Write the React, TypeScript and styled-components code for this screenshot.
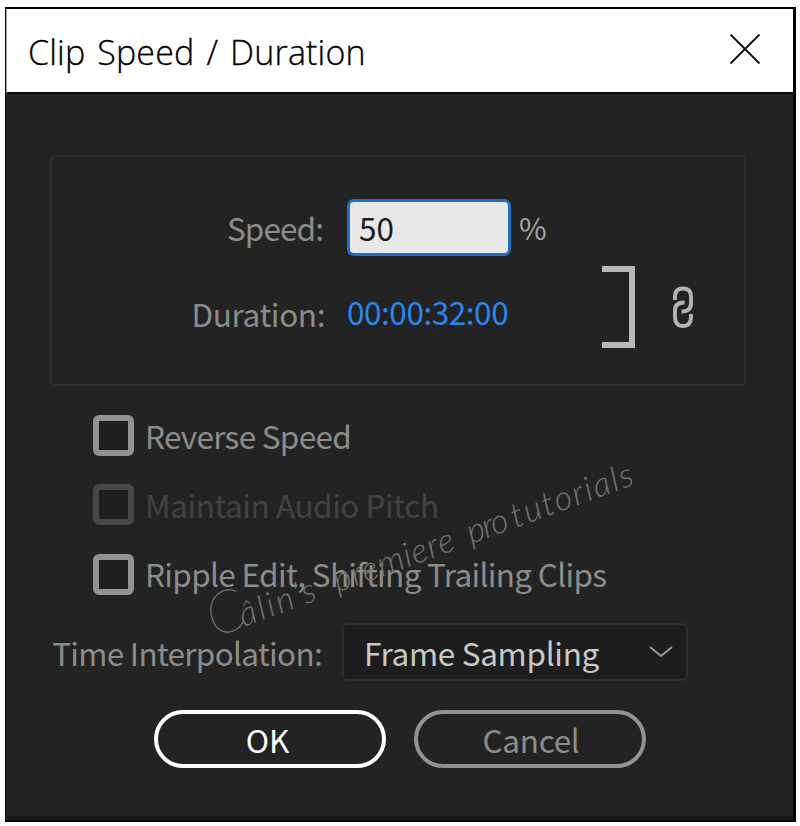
import React from "react";
import styled, { createGlobalStyle } from "styled-components";

const GlobalStyle = createGlobalStyle`
  * { box-sizing: border-box; }
  body {
    margin: 0;
    background: #fff;
    font-family: "Noto Sans CJK KR", "Noto Sans", sans-serif;
  }
  button { font: inherit; padding: 0; margin: 0; }
`;

const Dialog = styled.main`
  position: relative;
  width: 791px;
  height: 815px;
  margin: 7px 0 0 5px;
  display: flex;
  flex-direction: column;
  background: #232323;
  border: solid #000;
  border-width: 2px 3px 2px 1px;
  overflow: hidden;
`;

const TitleBar = styled.header`
  height: 85px;
  flex: none;
  display: flex;
  align-items: center;
  justify-content: space-between;
  padding: 0 32px 2px 21px;
  background: #fff;
  border-bottom: 2px solid #080808;
  border-left: 1px solid #aaa;
`;

const Title = styled.h1`
  margin: 4px 0 0;
  font-family: "Open Sans", "Noto Sans", sans-serif;
  font-size: 34px;
  line-height: 48px;
  font-weight: 300;
  color: #000;
  -webkit-text-stroke: 0.3px #000;
  letter-spacing: 0.15px;
  word-spacing: 3px;
  white-space: nowrap;
`;

const CloseButton = styled.button`
  width: 32px;
  height: 32px;
  margin-bottom: 1px;
  border: 0;
  background: none;
  display: grid;
`;

const Body = styled.div`
  flex: 1;
  display: flex;
  flex-direction: column;
  padding-top: 61px;
  border-bottom: 4px solid #1b1b1b;
`;

const Group = styled.section`
  width: 696px;
  height: 231px;
  margin-left: 44px;
  display: flex;
  border: 2px solid #2e2e2e;
  border-radius: 6px;
`;

const Fields = styled.div`
  width: 498px;
  padding-top: 41px;
  display: flex;
  flex-direction: column;
  gap: 26px;
`;

const Field = styled.div`
  height: 58px;
  display: flex;
  align-items: center;
`;

const Text = styled.span<{ $color?: string; $track?: number; $drop?: number }>`
  display: block;
  font-size: 31.5px;
  line-height: 46px;
  white-space: nowrap;
  color: ${(p) => p.$color ?? "#8c8c8c"};
  letter-spacing: ${(p) => p.$track ?? 0}px;
  padding-top: ${(p) => p.$drop ?? 0}px;
`;

const FieldLabel = styled.div<{ $width: number; $gap: number }>`
  width: ${(p) => p.$width}px;
  margin-right: ${(p) => p.$gap}px;
  display: flex;
  justify-content: flex-end;
`;

const SpeedInput = styled.div`
  width: 164px;
  height: 57px;
  margin-right: 8px;
  padding-left: 9px;
  display: flex;
  align-items: center;
  background: #e8e8e8;
  border: 3px solid #1f6fc4;
  border-radius: 7px;
`;

const Percent = styled(Text)`
  font-size: 30px;
`;

const LinkArea = styled.div`
  display: flex;
  align-items: center;
  padding: 73px 0 0 51px;
  gap: 37px;
`;

const Options = styled.div`
  display: flex;
  flex-direction: column;
  gap: 28px;
  margin: 29px 0 0 87px;
`;

const Option = styled.div`
  height: 41.3px;
  display: flex;
  align-items: center;
  gap: 11px;

  & > span:last-child {
    margin-top: -2px;
  }
`;

const CheckBox = styled.span<{ $disabled?: boolean }>`
  width: 41px;
  height: 41px;
  flex: none;
  border: 6px solid ${(p) => (p.$disabled ? "#474747" : "#929292")};
  border-radius: 6px;
  background: #1f1f1f;
`;

const Interpolation = styled.div`
  display: flex;
  align-items: center;
  height: 58px;
  margin-top: 28px;
`;

const Dropdown = styled.div`
  width: 346px;
  height: 58px;
  display: flex;
  align-items: center;
  justify-content: space-between;
  padding: 0 13px 0 20px;
  background: #1d1d1d;
  border: 2px solid #2e2e2e;
  border-radius: 6px;
`;

const Actions = styled.footer`
  display: flex;
  gap: 28px;
  margin: 29px 0 0 147.500px;
`;

const ActionButton = styled.button<{ $color: string; $shift: number }>`
  width: 232px;
  height: 58px;
  display: flex;
  align-items: center;
  justify-content: center;
  padding-left: ${(p) => Math.max(p.$shift, 0)}px;
  padding-right: ${(p) => Math.max(-p.$shift, 0)}px;
  background: #232323;
  border: 4px solid ${(p) => p.$color};
  border-radius: 30px;
`;

const Watermark = styled.div`
  position: absolute;
  left: 211px;
  top: 586px;
  display: flex;
  align-items: baseline;
  transform: rotate(-20deg);
  transform-origin: 0 100%;
  font-family: Lato, sans-serif;
  font-style: italic;
  font-weight: 300;
  font-size: 34px;
  line-height: 40px;
  color: #747474;
  white-space: nowrap;
  pointer-events: none;
`;

const Word = styled.span<{ $width: number; $track: number }>`
  width: ${(p) => p.$width}px;
  letter-spacing: ${(p) => p.$track}px;
`;

const Initial = styled.span`
  font-size: 58px;
  font-weight: 100;
  letter-spacing: -6px;
  -webkit-text-stroke: 0.5px #747474;
`;

function LinkIcon() {
  return (
    <svg width="22" height="44" viewBox="0 0 22 44" fill="none" stroke="#b5b5b5" strokeWidth="3.9">
      <path d="M3 15V11.500C3 6 6 3.500 11 3.500S19 6 19 11.500V18.500C19 23.500 16 26.500 9.500 26.500" />
      <path d="M12.500 17.500C6 17.500 3 20.500 3 25.500V32.500C3 38 6 41 11 41S19 38 19 32.500V29" />
    </svg>
  );
}

export default function App() {
  return (
    <>
      <GlobalStyle />
      <Dialog>
        <TitleBar>
          <Title>Clip Speed / Duration</Title>
          <CloseButton aria-label="Close">
            <svg width="32" height="32" viewBox="0 0 32 32" stroke="#111" strokeWidth="1.9">
              <path d="M1.500 1.500 30.500 30.500M30.500 1.500 1.500 30.500" />
            </svg>
          </CloseButton>
        </TitleBar>
        <Body>
          <Group>
            <Fields>
              <Field>
                <FieldLabel $width={271} $gap={24}>
                  <Text $track={-0.9}>Speed:</Text>
                </FieldLabel>
                <SpeedInput>
                  <Text $color="#1c1c1c">50</Text>
                </SpeedInput>
                <Percent $color="#a5a5a5">%</Percent>
              </Field>
              <Field>
                <FieldLabel $width={273} $gap={22}>
                  <Text $drop={3} $track={-0.4}>Duration:</Text>
                </FieldLabel>
                <Text $color="#2b86ee" $track={-0.45}>00:00:32:00</Text>
              </Field>
            </Fields>
            <LinkArea>
              <svg width="34" height="82" viewBox="0 0 34 82" fill="none" stroke="#b8b8b8" strokeWidth="6">
                <path d="M1 3H31V79H1" />
              </svg>
              <LinkIcon />
            </LinkArea>
          </Group>
          <Options>
            <Option>
              <CheckBox />
              <Text $track={-0.7}>Reverse Speed</Text>
            </Option>
            <Option>
              <CheckBox $disabled />
              <Text $color="#424242" $track={-0.45}>Maintain Audio Pitch</Text>
            </Option>
            <Option>
              <CheckBox />
              <Text $track={-0.67}>Ripple Edit, Shifting Trailing Clips</Text>
            </Option>
          </Options>
          <Interpolation>
            <FieldLabel $width={316} $gap={20}>
              <Text $track={-0.7}>Time Interpolation:</Text>
            </FieldLabel>
            <Dropdown>
              <Text $color="#c8c8c8" $track={-0.3}>Frame Sampling</Text>
              <svg width="24" height="14" viewBox="0 0 24 14" fill="none" stroke="#999" strokeWidth="2">
                <path d="M1 2 12 11 23 2" />
              </svg>
            </Dropdown>
          </Interpolation>
          <Actions>
            <ActionButton $color="#fff" $shift={-4}>
              <Text $color="#fff">OK</Text>
            </ActionButton>
            <ActionButton $color="#929292" $shift={3}>
              <Text $track={-0.3}>Cancel</Text>
            </ActionButton>
          </Actions>
        </Body>
        <Watermark>
          <Word $width={131} $track={2.5}><Initial>C</Initial>âlin’s</Word>
          <Word $width={142} $track={1}>premiere</Word>
          <Word $width={47} $track={-1.5}>pro</Word>
          <Word $width={140} $track={1.8}>tutorials</Word>
        </Watermark>
      </Dialog>
    </>
  );
}
